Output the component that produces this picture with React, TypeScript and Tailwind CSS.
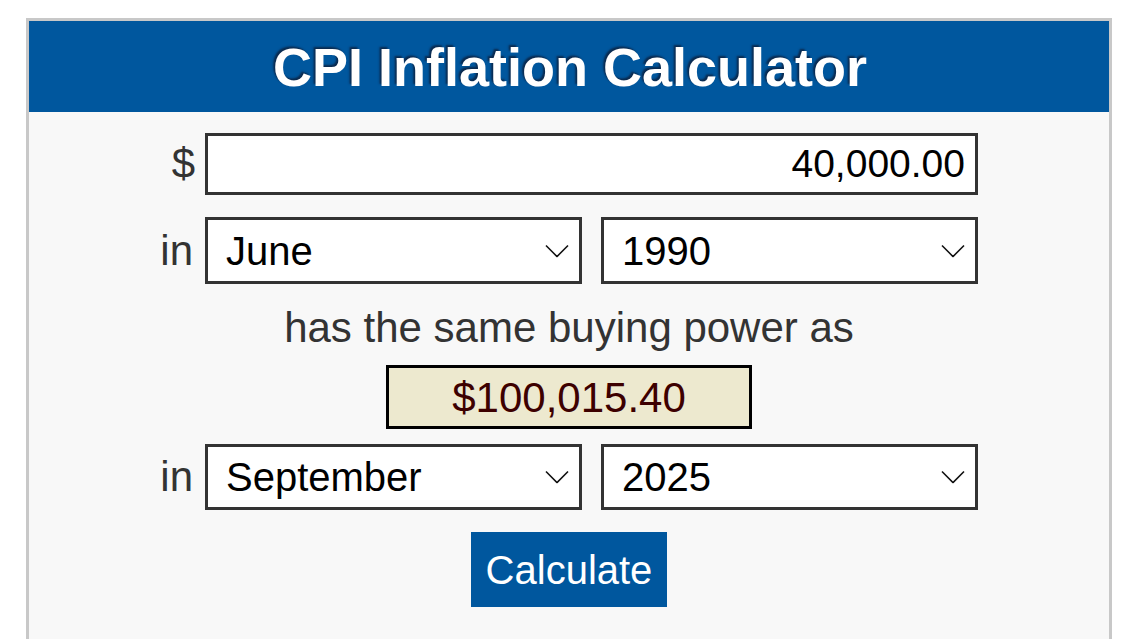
import { useState } from "react";

const months = [
  "January", "February", "March", "April", "May", "June",
  "July", "August", "September", "October", "November", "December",
];
const years = Array.from({ length: 113 }, (_, i) => String(1913 + i));

const Chevron = () => (
  <svg
    className="pointer-events-none absolute right-[13px] top-1/2 -translate-y-1/2"
    width="24"
    height="13"
    viewBox="0 0 24 13"
    fill="none"
  >
    <path d="M1 1l11 11L23 1" stroke="#111" strokeWidth="1.6" />
  </svg>
);

const Picker = ({ value, options, onChange, h }: { value: string; options: string[]; onChange: (v: string) => void; h: string }) => (
  <div className="relative w-[377px]">
    <select
      value={value}
      onChange={(e) => onChange(e.target.value)}
      className={`${h} w-full appearance-none rounded-none border-[3px] border-[#333] bg-white pl-[18px] text-[40px] text-black outline-none`}
    >
      {options.map((o) => (
        <option key={o}>{o}</option>
      ))}
    </select>
    <Chevron />
  </div>
);

export default function App() {
  const [amount, setAmount] = useState("40,000.00");
  const [m1, setM1] = useState("June");
  const [y1, setY1] = useState("1990");
  const [m2, setM2] = useState("September");
  const [y2, setY2] = useState("2025");

  return (
    <div className="min-h-screen bg-white pt-[18px] pl-[26px] font-['Liberation_Sans',Arial,sans-serif]">
      <div className="h-[700px] w-[1086px] border-[3px] border-[#c8c8c8] bg-[#f8f8f8]">
        {/* header */}
        <div className="flex h-[91px] items-center justify-center bg-[#00579e]">
          <h1 className="pl-[2px] pt-[2px] text-[54px] font-bold text-white [text-shadow:-2px_-2px_2px_#0a2a4f]">
            CPI Inflation Calculator
          </h1>
        </div>

        <div className="flex flex-col items-center pt-[21px]">
          <div className="grid grid-cols-[35px_773px] gap-x-[10px]">
            <span className="self-center text-right text-[42px] leading-none text-[#333]">$</span>
            <input
              value={amount}
              onChange={(e) => setAmount(e.target.value)}
              className="h-[62px] w-full border-[3px] border-[#333] bg-white pr-[10px] text-right text-[39px] text-black outline-none"
            />

            <span className="mt-[22px] self-center pr-[2px] text-right text-[42px] leading-none text-[#333]">in</span>
            <div className="mt-[22px] flex gap-[19px]">
              <Picker value={m1} options={months} onChange={setM1} h="h-[67px]" />
              <Picker value={y1} options={years} onChange={setY1} h="h-[67px]" />
            </div>
          </div>

          <p className="mt-[20px] text-[42px] leading-[48px] text-[#333]">has the same buying power as</p>

          <div className="mt-[13px] flex h-[64px] w-[366px] items-center justify-center border-[3px] border-black bg-[#ede9cf] text-[42px] text-[#3d0000]">
            $100,015.40
          </div>

          <div className="mt-[15px] grid grid-cols-[35px_773px] gap-x-[10px]">
            <span className="self-center pr-[2px] text-right text-[42px] leading-none text-[#333]">in</span>
            <div className="flex gap-[19px]">
              <Picker value={m2} options={months} onChange={setM2} h="h-[66px]" />
              <Picker value={y2} options={years} onChange={setY2} h="h-[66px]" />
            </div>
          </div>

          <button className="mt-[22px] h-[75px] w-[196px] bg-[#00579e] text-[40px] text-white">
            Calculate
          </button>
        </div>
      </div>
    </div>
  );
}
